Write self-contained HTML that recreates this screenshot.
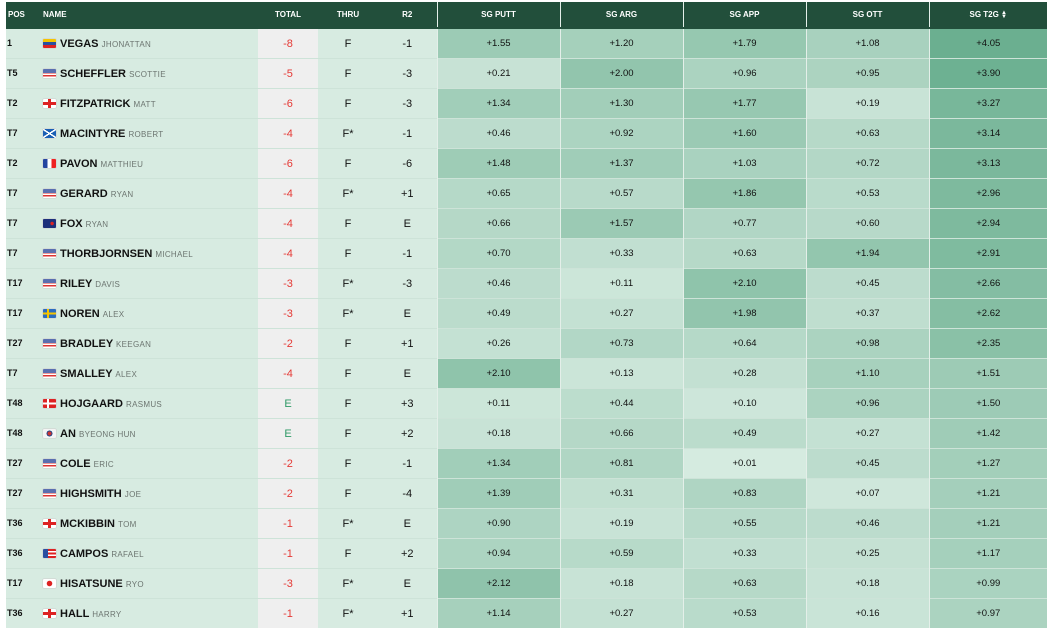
<!DOCTYPE html><html><head><style>
body{margin:0;background:#fff;font-family:"Liberation Sans",Verdana,sans-serif;width:1047px;height:629px;overflow:hidden}
table{position:absolute;left:6px;top:2px;border-collapse:collapse;table-layout:fixed;width:1041px}
th{background:#224f3b;color:#fff;font-size:8px;font-weight:bold;height:25px;padding:0;text-align:center;border-bottom:2px solid #224f3b}
td{height:29px;padding:0;border-top:1px solid #cde3d8;background:#d7ebe1;font-size:10px;color:#111;text-align:center}
td.pos{text-align:left;font-weight:bold;font-size:9px;padding-left:1px;vertical-align:top;padding-top:9px;height:20px}
td.nm{text-align:left;font-size:11px;font-weight:bold;white-space:nowrap;padding-left:4px}
td.nm span{font-size:8px;color:#6c7570;font-weight:normal;letter-spacing:.3px}
.fl{display:inline-block;width:13px;height:9px;vertical-align:-1px;margin-right:4px;border-radius:1px}
td.tot{background:#efefef;color:#e53935;font-size:11px}
td.tot.e{color:#2e9a66}
td.th{font-size:11px}td.r2{font-size:11px}
td.sg{border-left:1px solid #e4efe9;font-size:9.5px}
th.sgh{border-left:1px solid #e4efe9}
.sep{border-left:1px solid #fff}
</style></head><body>
<table id="t"><colgroup><col style="width:33px"><col style="width:219px"><col style="width:60px"><col style="width:60px"><col style="width:59px"><col style="width:123px"><col style="width:123px"><col style="width:123px"><col style="width:123px"><col style="width:118px"></colgroup>
<tr><th style="text-align:left;padding-left:2px">POS</th><th style="text-align:left;padding-left:4px">NAME</th><th>TOTAL</th><th>THRU</th><th>R2</th><th class="sgh sep">SG PUTT</th><th class="sgh">SG ARG</th><th class="sgh">SG APP</th><th class="sgh">SG OTT</th><th class="sgh">SG T2G <span style="font-size:6px;display:inline-block;line-height:4px;vertical-align:-1px">&#9650;<br>&#9660;</span></th></tr>
</table>
<script>
var d=[["1","ve","VEGAS","JHONATTAN","-8","F","-1",1.55,1.20,1.79,1.08,4.05],
["T5","us","SCHEFFLER","SCOTTIE","-5","F","-3",0.21,2.00,0.96,0.95,3.90],
["T2","en","FITZPATRICK","MATT","-6","F","-3",1.34,1.30,1.77,0.19,3.27],
["T7","sc","MACINTYRE","ROBERT","-4","F*","-1",0.46,0.92,1.60,0.63,3.14],
["T2","fr","PAVON","MATTHIEU","-6","F","-6",1.48,1.37,1.03,0.72,3.13],
["T7","us","GERARD","RYAN","-4","F*","+1",0.65,0.57,1.86,0.53,2.96],
["T7","nz","FOX","RYAN","-4","F","E",0.66,1.57,0.77,0.60,2.94],
["T7","us","THORBJORNSEN","MICHAEL","-4","F","-1",0.70,0.33,0.63,1.94,2.91],
["T17","us","RILEY","DAVIS","-3","F*","-3",0.46,0.11,2.10,0.45,2.66],
["T17","se","NOREN","ALEX","-3","F*","E",0.49,0.27,1.98,0.37,2.62],
["T27","us","BRADLEY","KEEGAN","-2","F","+1",0.26,0.73,0.64,0.98,2.35],
["T7","us","SMALLEY","ALEX","-4","F","E",2.10,0.13,0.28,1.10,1.51],
["T48","dk","HOJGAARD","RASMUS","E","F","+3",0.11,0.44,0.10,0.96,1.50],
["T48","kr","AN","BYEONG HUN","E","F","+2",0.18,0.66,0.49,0.27,1.42],
["T27","us","COLE","ERIC","-2","F","-1",1.34,0.81,0.01,0.45,1.27],
["T27","us","HIGHSMITH","JOE","-2","F","-4",1.39,0.31,0.83,0.07,1.21],
["T36","en","MCKIBBIN","TOM","-1","F*","E",0.90,0.19,0.55,0.46,1.21],
["T36","pr","CAMPOS","RAFAEL","-1","F","+2",0.94,0.59,0.33,0.25,1.17],
["T17","jp","HISATSUNE","RYO","-3","F*","E",2.12,0.18,0.63,0.18,0.99],
["T36","en","HALL","HARRY","-1","F*","+1",1.14,0.27,0.53,0.16,0.97]];
var fl={us:"linear-gradient(#5a6fb0 0 45%,transparent 45%),repeating-linear-gradient(#d33 0 1.5px,#fff 1.5px 3px)",
ve:"linear-gradient(#f5c400 0 33%,#2a4fa0 33% 66%,#d22 66%)",
sc:"linear-gradient(33deg,transparent 45%,#fff 45% 55%,transparent 55%),linear-gradient(-33deg,#1a5fb4 45%,#fff 45% 55%,#1a5fb4 55%)",
fr:"linear-gradient(90deg,#2545a0 0 33%,#fff 33% 66%,#e22 66%)",
nz:"radial-gradient(circle at 70% 50%,#d22 1.5px,transparent 2px),#1c2f7a",
se:"linear-gradient(90deg,transparent 4px,#f5c400 4px 6px,transparent 6px),linear-gradient(transparent 3.5px,#f5c400 3.5px 5.5px,transparent 5.5px),#2a6cc0",
dk:"linear-gradient(90deg,transparent 4px,#fff 4px 6px,transparent 6px),linear-gradient(transparent 3.5px,#fff 3.5px 5.5px,transparent 5.5px),#d22",
kr:"radial-gradient(circle,#c33 0 2px,#248 2px 3px,transparent 3px),#f4f4f4",
pr:"linear-gradient(90deg,#2a4fa0 0 40%,transparent 40%),repeating-linear-gradient(#d22 0 1.8px,#fff 1.8px 3.6px)",
jp:"radial-gradient(circle,#d22 0 2.5px,transparent 3px),#fff"};
fl.en="linear-gradient(90deg,transparent 5px,#d22 5px 8px,transparent 8px),linear-gradient(transparent 3px,#d22 3px 6px,transparent 6px),#fff";
function col(v){var f=Math.pow(Math.min(v,4.1)/4.1,0.62);var a=[216,236,226],b=[106,175,143];
return "rgb("+a.map(function(x,i){return Math.round(x+(b[i]-x)*f)}).join(",")+")";}
var h="";d.forEach(function(r){h+="<tr><td class='pos'>"+r[0]+"</td><td class='nm'><i class='fl' style='background:"+fl[r[1]]+";box-shadow:0 0 0 .5px #ccc'></i>"+r[2]+" <span>"+r[3]+"</span></td><td class='tot"+(r[4]=="E"?" e":"")+"'>"+r[4]+"</td><td class='th'>"+r[5]+"</td><td class='r2'>"+r[6]+"</td>";
for(var i=7;i<12;i++)h+="<td class='sg"+(i==7?" sep":"")+"' style='background:"+col(r[i])+"'>+"+r[i].toFixed(2)+"</td>";h+="</tr>";});
document.getElementById("t").insertAdjacentHTML("beforeend",h);
</script></body></html>
